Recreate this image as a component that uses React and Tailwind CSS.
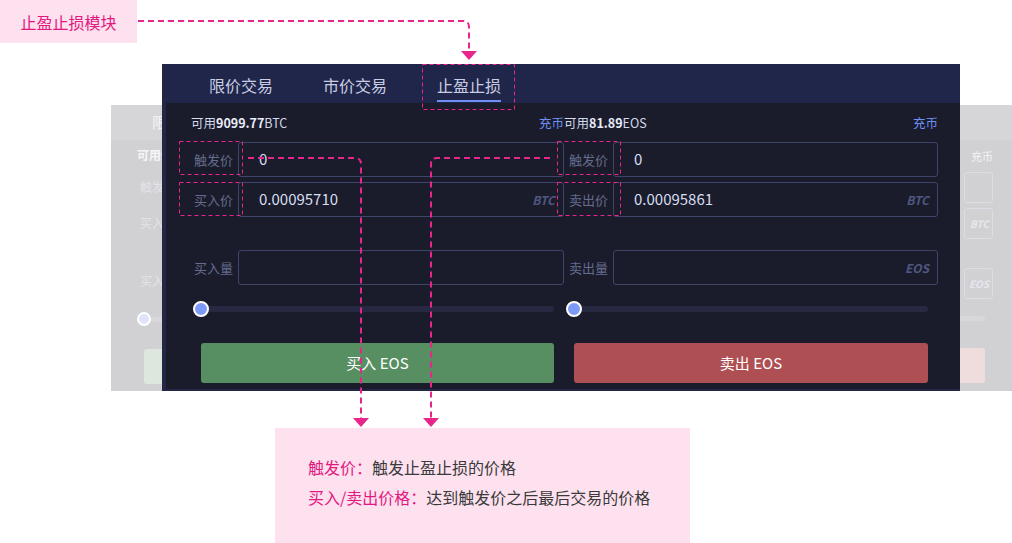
import React from 'react';

const PINK = '#e8258a';

function Field({ label, value, unit, labelW = 'w-[47px]' }) {
  return (
    <div className="flex h-[35px]">
      <div className={`${labelW} shrink-0 flex items-center justify-end pr-[5px] text-[13px] text-[#656c8e]`}>
        {label}
      </div>
      <div className="flex-1 flex items-center border border-[#3f4569] rounded-[3px] pl-[20px] pr-[8px]">
        <span className="flex-1 text-[15px] text-[#d8def2]">{value}</span>
        {unit && <span className="text-[12px] italic font-bold text-[#4f5780]">{unit}</span>}
      </div>
    </div>
  );
}

function Slider() {
  return (
    <div className="mt-[16px] h-[16px] px-[10px] flex items-center">
      <div className="relative flex-1 h-[6px] rounded-full bg-[#262941]">
        <div className="absolute -left-[8px] -top-[5px] w-[16px] h-[16px] rounded-full bg-[#7e9af7] border-2 border-white" />
      </div>
    </div>
  );
}

function Column({ coin, amount, labels, unitAmount, price, labelW, btn }) {
  return (
    <div className="flex flex-col">
      <div className="h-[16px] flex items-center justify-between text-[12.5px] leading-[16px]">
        <span className="text-[#d3d8ea]">
          可用<b className="text-[#e8ebf7]">{amount}</b>{coin}
        </span>
        <span className="text-[#6f8ff5]">充币</span>
      </div>
      <div className="mt-[11px]">
        <Field label="触发价" value="0" labelW={labelW} />
      </div>
      <div className="mt-[5px]">
        <Field label={labels[0]} value={price} unit="BTC" labelW={labelW} />
      </div>
      <div className="mt-[33px]">
        <Field label={labels[1]} value="" unit={unitAmount} labelW={labelW} />
      </div>
      <Slider />
      <div className="mt-[26px] px-[10px]">
        <div className={`h-[40px] rounded-[3px] flex items-center justify-center text-[15px] text-white ${btn.cls}`}>
          {btn.text}
        </div>
      </div>
    </div>
  );
}

// the panel sitting behind, washed out
function FadedPanel() {
  return (
    <div className="absolute left-[111px] top-[105px] w-[901px] h-[286px] bg-[#d1d1d4] flex flex-col overflow-hidden">
      <div className="h-[35px] bg-[#d6d6d9] flex items-center pl-[41px] text-[15px] text-[#f4f4f8]">限</div>
      <div className="flex-1 flex">
        <div className="w-[51px] flex flex-col whitespace-nowrap">
          <div className="mt-[7px] pl-[26px] text-[12px] leading-[16px] font-bold text-[#f6f6fa]">可用9</div>
          <div className="mt-[15px] pl-[29px] text-[12px] leading-[18px] text-[#e3e3e9]">触发</div>
          <div className="mt-[18px] pl-[29px] text-[12px] leading-[18px] text-[#e3e3e9]">买入</div>
          <div className="mt-[40px] pl-[29px] text-[12px] leading-[18px] text-[#e3e3e9]">买入</div>
          <div className="mt-[22px] pl-[26px] flex items-center">
            <div className="w-[14px] h-[14px] shrink-0 rounded-full bg-[#dfe4fb] border-2 border-white" />
            <div className="flex-1 h-[5px] bg-[#d8d8dc]" />
          </div>
          <div className="mt-[23px] ml-[33px] h-[35px] rounded-l-[3px] bg-[#dde7de]" />
        </div>
        <div className="flex-1" />
        <div className="w-[52px] flex flex-col whitespace-nowrap">
          <div className="mt-[7px] pr-[19px] text-right text-[11px] leading-[18px] text-[#f3f3f8]">充币</div>
          <div className="mt-[7px] ml-[4px] mr-[19px] h-[31px] border border-[#dcdde5] rounded-[3px]" />
          <div className="mt-[5px] ml-[4px] mr-[19px] h-[31px] border border-[#dcdde5] rounded-[3px] flex items-center justify-end pr-[3px] text-[10px] italic font-bold text-[#e6e7ee]">BTC</div>
          <div className="mt-[29px] ml-[4px] mr-[19px] h-[31px] border border-[#dcdde5] rounded-[3px] flex items-center justify-end pr-[3px] text-[10px] italic font-bold text-[#e6e7ee]">EOS</div>
          <div className="mt-[17px] mr-[27px] h-[5px] rounded-r-full bg-[#d8d8dc]" />
          <div className="mt-[27px] mr-[27px] h-[35px] rounded-r-[3px] bg-[#efdcdc]" />
        </div>
      </div>
    </div>
  );
}

function Annotations() {
  const thick = { stroke: PINK, strokeWidth: 2, fill: 'none', strokeDasharray: '6 4' };
  const thin = { stroke: PINK, strokeWidth: 1, fill: 'none', strokeDasharray: '4 3' };
  return (
    <svg className="absolute inset-0 pointer-events-none" width="1012" height="543">
      <path d="M138 21 H463 Q469 21 469 27 V51" {...thick} />
      <polygon points="461,51 477,51 469,60" fill={PINK} />
      <path d="M248 158 H355 Q361 158 361 164 V418" {...thick} />
      <polygon points="353,418 369,418 361,427" fill={PINK} />
      <path d="M550 158 H437 Q431 158 431 164 V418" {...thick} />
      <polygon points="423,418 439,418 431,427" fill={PINK} />
      <rect x="422.5" y="64.5" width="92" height="45" {...thin} />
      <rect x="179.5" y="141.5" width="63" height="33" {...thin} />
      <rect x="179.5" y="182.5" width="63" height="33" {...thin} />
      <rect x="557.5" y="141.5" width="63" height="33" {...thin} />
      <rect x="557.5" y="182.5" width="63" height="33" {...thin} />
    </svg>
  );
}

export default function App() {
  const tabs = ['限价交易', '市价交易', '止盈止损'];
  return (
    <div className="relative w-[1012px] h-[543px] bg-white overflow-hidden font-['Noto_Sans_CJK_SC',sans-serif]">
      <div className="absolute left-0 top-0 w-[137px] h-[43px] bg-[#fde1ef] flex items-center justify-center text-[16px] text-[#e2197f]">
        止盈止损模块
      </div>

      <FadedPanel />

      {/* trading panel */}
      <div className="absolute left-[162px] top-[64px] w-[798px] h-[327px] flex flex-col border-l-4 border-b-2 border-[#222744] bg-[#1a1c2b]">
        <div className="h-[39px] shrink-0 bg-[#20264a] flex pl-[43px] gap-[50px]">
          {tabs.map((t, i) => (
            <div key={t} className="flex flex-col pt-[11px]">
              <span className="text-[16px] leading-[20px] text-[#c9cee4]">{t}</span>
              <div className={`mt-[5px] h-[2px] ${i === 2 ? 'bg-[#6e8ef2]' : ''}`} />
            </div>
          ))}
        </div>
        <div className="grid grid-cols-[373px_374px] pl-[25px] pr-[22px] pt-[12px]">
          <Column
            coin="BTC"
            amount="9099.77"
            labels={['买入价', '买入量']}
            price="0.00095710"
            labelW="w-[47px]"
            btn={{ text: '买入 EOS', cls: 'bg-[#578f63]' }}
          />
          <Column
            coin="EOS"
            amount="81.89"
            labels={['卖出价', '卖出量']}
            unitAmount="EOS"
            price="0.00095861"
            labelW="w-[49px]"
            btn={{ text: '卖出 EOS', cls: 'bg-[#ae5053]' }}
          />
        </div>
      </div>

      <Annotations />

      <div className="absolute left-[275px] top-[428px] w-[415px] h-[115px] bg-[#fde1ef] pl-[33px] pt-[24px] text-[16px] leading-[30px] text-[#3a3a3a]">
        <div>
          <span className="text-[#e2197f]">触发价：</span>触发止盈止损的价格
        </div>
        <div>
          <span className="text-[#e2197f]">买入/卖出价格：</span>达到触发价之后最后交易的价格
        </div>
      </div>
    </div>
  );
}
